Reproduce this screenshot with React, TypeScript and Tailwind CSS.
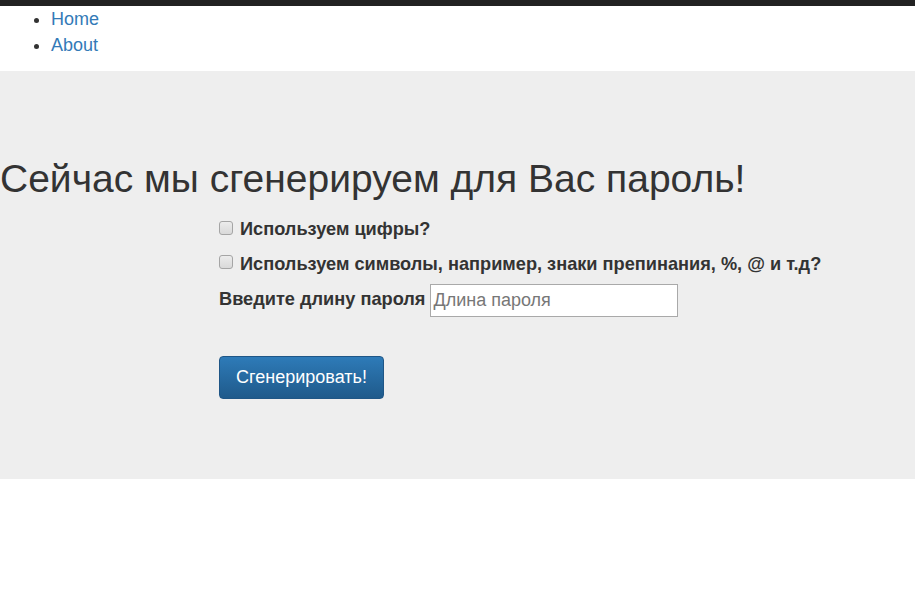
function Check() {
  return (
    <span className="inline-block w-[14px] h-[14px] mr-[7px] -mt-[5px] rounded-[3px] border border-[#a5a5a5] bg-gradient-to-b from-[#ececec] to-[#d9d9d9] shrink-0" />
  );
}

export default function App() {
  return (
    <div className="min-h-[600px] bg-white text-[#333]" style={{ fontFamily: '"Liberation Sans", Arial, sans-serif' }}>
      <div className="h-[6px] bg-[#222]" />
      <ul className="list-disc pl-[51px] m-0 pb-[13px] text-[18px] leading-[26px]">
        <li><a className="text-[#337ab7]" href="#">Home</a></li>
        <li><a className="text-[#337ab7]" href="#">About</a></li>
      </ul>
      <div className="bg-[#eeeeee] h-[408px] pt-[86px]">
        <h1 className="text-[39px] leading-[44px] font-normal text-[#333] m-0">Сейчас мы сгенерируем для Вас пароль!</h1>
        <div className="pl-[219px] pt-[12px] text-[18.2px] font-bold">
          <div className="flex items-center h-[34px]">
            <Check />
            <span>Используем цифры?</span>
          </div>
          <div className="flex items-center h-[35px]">
            <Check />
            <span>Используем символы, например, знаки препинания, %, @ и т.д?</span>
          </div>
          <div className="flex items-center h-[36px]">
            <span>Введите длину пароля</span>
            <input type="text" placeholder="Длина пароля" className="ml-[5px] w-[248px] h-[33px] bg-white border border-[#a9a9a9] px-[2px] text-[18px] font-normal placeholder:text-[#777] outline-none" />
          </div>
          <button className="mt-[38px] w-[165px] h-[43px] rounded-[4px] border border-[#1f5686] text-white text-[18px] font-normal bg-gradient-to-b from-[#2e7bb8] to-[#1f5a8b]">Сгенерировать!</button>
        </div>
      </div>
    </div>
  );
}
